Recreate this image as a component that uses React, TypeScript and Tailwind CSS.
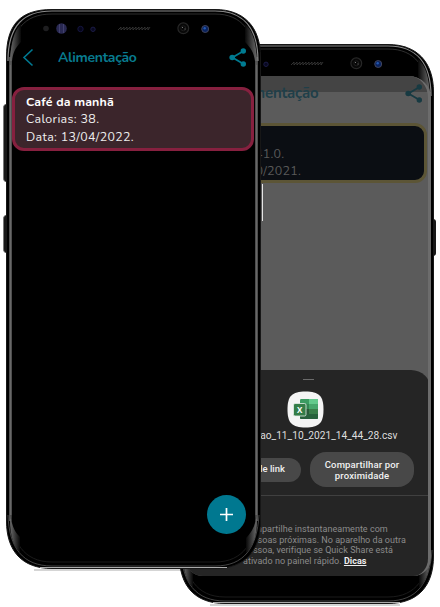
import React from "react";

function Hardware({ id }: { id: string }) {
  return (
    <svg className="absolute inset-0" width="255" height="561" viewBox="0 0 255 561" fill="none">
      <defs>
        <linearGradient id={id + "l"} x1="0" x2="1"><stop stopColor="#6b6b6b" /><stop offset="1" stopColor="#080808" /></linearGradient>
        <linearGradient id={id + "r"} x1="1" x2="0"><stop stopColor="#6b6b6b" /><stop offset="1" stopColor="#080808" /></linearGradient>
      </defs>
      <path d="M.5 48C.5 16 14 .5 46 .5H209C238 .5 254.500 18 254.500 48V512C254.500 542 239 559.500 209 559.500H46C16 559.500 .5 542 .5 512Z" fill="#000" stroke="#171717" />
      <path d="M4.500 512V48M250.500 512V48" stroke="#686868" strokeWidth="2.500" />
      <path d="M2 52C2 16 18 2 46 2H209C238 2 252 20 252 52" stroke="#8b8b8b" strokeWidth="1.200" />
      <path d="M4 56C5 21 18 5 46 5H209C236 5 249 23 251 56" stroke="#444" strokeWidth=".7" />
      <path d="M2 506C3 539 17 557 46 557H209C238 557 251 539 253 506" stroke="#555" strokeWidth=".8" />
      <path d="M34 558.500H221" stroke="#aaa" strokeWidth="1" />
      <path d="M5 506C6 532 17 553 46 553H209C238 553 249 532 250 506" stroke="#222" strokeWidth=".8" />
      <path d="M4 52C5 33 8 22 15 15V33C9 39 7 44 6 52Z" fill={`url(#${id}l)`} />
      <path d="M251 52C250 33 247 22 239 15V33C245 39 248 44 249 52Z" fill={`url(#${id}r)`} />
      <path d="M5 510C7 520 10 524 14 528V544C8 537 4 528 4 510Z" fill={`url(#${id}l)`} />
      <path d="M250 510C248 520 244 525 240 529V544C247 537 251 528 251 510Z" fill={`url(#${id}r)`} />
      <circle cx="40" cy="19.500" r="2.800" fill="#1e1e20" />
      <circle cx="55.500" cy="19.500" r="5.300" fill="#292952" />
      <path d="M53.500 15V24M57.500 15V24" stroke="#41406d" />
      <circle cx="74.500" cy="20" r="2.700" fill="#05051a" stroke="#15153e" />
      <circle cx="87" cy="20.300" r="2.200" fill="#080820" stroke="#1c1c46" />
      <path d="M112 21L115 18L115 21L118 18L118 21L121 18L121 21L124 18L124 21L127 18L127 21L130 18L130 21L133 18L133 21L136 18L136 21L139 18L139 21L142 18L142 21L144 18" stroke="#363636" strokeWidth=".9" />
      <circle cx="177.300" cy="19.300" r="5.400" fill="#080808" stroke="#272727" strokeWidth="1.200" />
      <circle cx="177.300" cy="19.300" r="2.500" stroke="#1c1c1c" />
      <path d="M176 18.500H177M178.500 20H179.500" stroke="#777" />
      <circle cx="199.200" cy="20" r="3.500" fill="#09235f" stroke="#41445b" />
      <circle cx="198.700" cy="19.300" r="1.200" fill="#2559b1" />
    </svg>
  );
}

function Share({ color }: { color: string }) {
  return (
    <svg width="18" height="20" viewBox="0 0 18 20" fill={color}>
      <path d="M14.500 3L3.500 9.500L14.500 16" fill="none" stroke={color} strokeWidth="1.800" />
      <circle cx="14.300" cy="3" r="2.700" /><circle cx="3.200" cy="9.500" r="2.800" /><circle cx="14.300" cy="16" r="2.700" />
    </svg>
  );
}

function Excel() {
  return (
    <svg width="37" height="37" viewBox="0 0 37 37">
      <path d="M18.500 .5C32 .5 36.500 5 36.500 18.500S32 36.500 18.500 36.500 .5 32 .5 18.500 5 .5 18.500 .5Z" fill="#f4f4f4" />
      <rect x="13" y="8" width="18" height="20" rx="1.200" fill="#3c9b62" />
      <path d="M22 8H30Q31 8 31 9V13H22Z" fill="#63c98c" />
      <path d="M13 13H22V18H13Z" fill="#348653" /><path d="M22 13H31V18H22Z" fill="#47a66c" />
      <path d="M13 18H22V23H13Z" fill="#295b39" /><path d="M22 18H31V23H22Z" fill="#397d49" />
      <path d="M13 23H31V27Q31 28 30 28H14Q13 28 13 27Z" fill="#28613c" />
      <rect x="6.500" y="12.500" width="12.500" height="12.500" rx="1.500" fill="#347d48" stroke="#e4eee7" strokeWidth=".8" />
      <text x="12.700" y="21.700" textAnchor="middle" fill="white" fontFamily="Open Sans, sans-serif" fontSize="8" fontWeight="700">X</text>
    </svg>
  );
}

function BackPhone() {
  return (
    <section className="absolute left-[179px] top-[44px] h-[561px] w-[255px]">
      <div className="absolute left-[254px] top-[175px] h-[37px] w-[3px] rounded-r-sm bg-[#181818]" />
      <Hardware id="back" />
      <div className="relative ml-[6px] flex h-[532px] w-[246px] flex-col overflow-hidden pt-[32px]">
        <div className="flex h-[500px] flex-col overflow-hidden rounded-b-[18px] rounded-t-[22px] border-r-[3px] border-[#6c6c6c] bg-[#5b5b5b]">
          <div className="h-[16px] shrink-0 bg-[#444]" />
          <header className="-mt-[8px] flex h-[39px] shrink-0 items-start justify-between pl-[48px] pr-[5px]">
            <h1 className="-mt-px whitespace-nowrap text-[15px] leading-[20px] tracking-[-0.220px] font-bold text-[#203f49]">Alimentação</h1>
            <Share color="#173a42" />
          </header>
          <article className="ml-[4px] mr-px h-[60px] shrink-0 rounded-[12px] border-[3px] border-[#5c5536] bg-[#0b0e13] pl-[4px] pt-[2px] text-[12.500px] leading-[17px] tracking-[0.250px] text-[#5a5a5a]">
            <b>Almoço</b><p className="pl-[5px]">Calorias: 41.0.</p><p className="-ml-[2px]">Data: 11/10/2021.</p>
          </article>
          <div className="ml-[77px] mt-px h-[37px] w-px shrink-0 bg-[#e5e5e5]" />
          <div className="-mr-[3px] mt-[149px] flex h-[206px] shrink-0 flex-col items-center rounded-t-[20px] bg-[#252525] font-[Roboto,sans-serif]">
            <div className="mt-[8.500px] h-px w-[11px] shrink-0 bg-[#6b6b6b]" />
            <div className="ml-[-5px] mt-[11px] h-[37px] shrink-0"><Excel /></div>
            <div className="mt-px w-[212.500px] shrink-0 whitespace-nowrap text-right text-[10.200px] leading-[14px] text-[#dedede] self-start">Alimentacao_11_10_2021_14_44_28.csv</div>
            <div className="mt-[9.500px] flex h-[35px] w-full shrink-0 items-center gap-[9px] pl-[12px]">
              <button className="h-[24px] w-[104px] rounded-[12px] bg-[#484848] pr-[16px] text-right text-[9.500px] font-medium text-[#eee]">Cópia de link</button>
              <button className="h-[35px] w-[104px] rounded-[16px] bg-[#484848] text-[9.500px] font-medium leading-[11px] tracking-[0.150px] text-[#f1f1f1]">Compartilhar por<br />proximidade</button>
            </div>
            <div className="mt-[8px] h-px w-full shrink-0 bg-[#404040]" />
            <p className="mt-[28px] w-[190px] shrink-0 self-start whitespace-nowrap pl-[58px] text-[9px] leading-[10.500px] tracking-[0.030px] text-[#8b8b8b]">Compartilhe instantaneamente com<br />pessoas próximas. No aparelho da outra<br />pessoa, verifique se Quick Share está<br />ativado no painel rápido. <b className="text-[#eee] underline">Dicas</b></p>
          </div>
        </div>
      </div>
    </section>
  );
}

function FrontPhone() {
  return (
    <section className="absolute left-[6px] top-[9px] h-[561px] w-[255px]">
      <div className="absolute -left-[3px] top-[95px] h-[78px] w-[4px] rounded-l-sm border-l border-[#777] bg-[#181818]" />
      <div className="absolute -left-[3px] top-[206px] h-[38px] w-[4px] rounded-l-sm border-l border-[#777] bg-[#181818]" />
      <Hardware id="front" />
      <div className="relative flex h-full flex-col px-[6px] pt-[39px]">
        <header className="flex h-[39px] items-start pl-[10px] pr-[8px]">
          <svg width="12" height="20" viewBox="0 0 12 20"><path d="M10.500 1.500L2 9.500L10.500 17.500" fill="none" stroke="#007991" strokeWidth="1.600" /></svg>
          <h1 className="ml-[24px] flex-1 whitespace-nowrap text-[14px] font-bold leading-[20px] tracking-[-0.300px] text-[#087b8f]">Alimentação</h1>
          <Share color="#007b91" />
        </header>
        <article className="h-[64px] w-[242px] rounded-[12px] border-[3px] border-[#86203f] bg-[#3b252b] pl-[11px] pt-[3px] text-[12.400px] leading-[17.400px] text-[#eee]">
          <h2 className="font-bold tracking-[0.150px] text-white">Café da manhã</h2>
          <p className="tracking-[0.350px]">Calorias: 38.</p>
          <p className="tracking-[0.350px]">Data: 13/04/2022.</p>
        </article>
        <button className="ml-auto mr-[9px] mt-[344px] flex size-[39px] items-center justify-center rounded-full bg-[#007890]">
          <svg width="13" height="13" viewBox="0 0 13 13"><path d="M6.500 0V13M0 6.500H13" stroke="white" strokeWidth="1.700" /></svg>
        </button>
      </div>
    </section>
  );
}

export default function App() {
  return (
    <main className="relative h-[607px] w-[440px] overflow-hidden bg-white font-['Nunito','Open_Sans',sans-serif]">
      <div className="absolute left-[34px] top-[569px] h-[2px] w-[150px] bg-[#d5d5d5]" />
      <div className="absolute left-[210px] top-[604px] h-[2px] w-[190px] bg-[#d5d5d5]" />
      <BackPhone />
      <FrontPhone />
    </main>
  );
}
